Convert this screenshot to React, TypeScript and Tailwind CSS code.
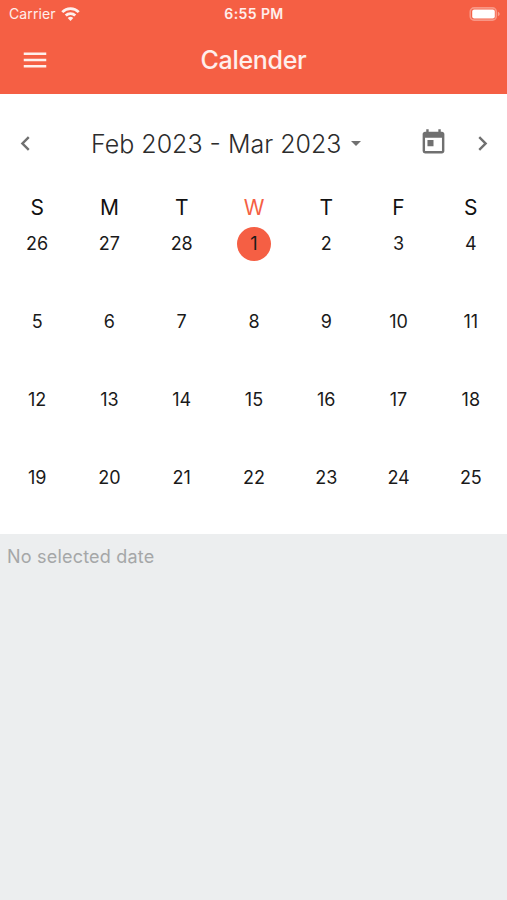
import { useState } from 'react'
import { MdArrowDropDown, MdChevronLeft, MdChevronRight, MdMenu, MdToday } from 'react-icons/md'

const weekdays = ['S', 'M', 'T', 'W', 'T', 'F', 'S']

const weeks = [
  [26, 27, 28, 1, 2, 3, 4],
  [5, 6, 7, 8, 9, 10, 11],
  [12, 13, 14, 15, 16, 17, 18],
  [19, 20, 21, 22, 23, 24, 25],
]

const TODAY = 1
const TODAY_COLUMN = 3

function WifiIcon() {
  return (
    <svg viewBox="0 0 20 15" className="w-[19px] h-[14px]" fill="none" stroke="currentColor" strokeWidth="3">
      <path d="M1.2 5.5a12.4 12.4 0 0 1 17.6 0" />
      <path d="M4.9 9.2a7.3 7.3 0 0 1 10.2 0" />
      <path d="M10 14.9l-3-3.1a4.3 4.3 0 0 1 6 0z" fill="currentColor" stroke="none" />
    </svg>
  )
}

function BatteryIcon() {
  return (
    <svg viewBox="0 0 31 14" className="w-[31px] h-[14px]" fill="none">
      <rect x="1.25" y="0.9" width="26" height="12.2" rx="3.8" stroke="white" strokeOpacity="0.35" strokeWidth="1.6" />
      <rect x="3.2" y="2.5" width="22.6" height="9" rx="2" fill="white" />
      <path d="M28.9 4.8c1.1.4 1.8 1.2 1.8 2.2s-.7 1.8-1.8 2.2z" fill="white" fillOpacity="0.4" />
    </svg>
  )
}

function StatusBar() {
  return (
    <div className="h-[27px] grid grid-cols-3 items-center px-[9px] text-[14px] leading-none">
      <div className="flex items-center gap-[5px] text-white/90">
        <span className="tracking-[0.1px]">Carrier</span>
        <WifiIcon />
      </div>
      <span className="pt-px pl-px text-center font-semibold tracking-[0.4px] text-white/90">6:55 PM</span>
      <div className="flex justify-end -mr-[2px]">
        <BatteryIcon />
      </div>
    </div>
  )
}

export default function App() {
  const [selected] = useState<number | null>(null)

  return (
    <div className="h-[900px] w-full flex flex-col bg-white overflow-hidden font-['Inter','Liberation_Sans',sans-serif]">
      <header className="h-[94px] shrink-0 bg-[#f55f44] text-white">
        <StatusBar />
        <div className="h-[66px] grid grid-cols-[70px_1fr_70px] items-center">
          <button className="pl-5">
            <MdMenu className="w-[30px] h-[30px] text-white/90" />
          </button>
          <h1 className="text-center text-[25px] leading-none font-medium tracking-[-0.3px] text-white/90">Calender</h1>
        </div>
      </header>

      {/* Month navigation */}
      <div className="h-[98px] shrink-0 flex items-center pl-[11px] pr-[10px] text-[#707070]">
        <button>
          <MdChevronLeft className="w-[29px] h-[29px]" />
        </button>
        <button className="ml-[51px] flex items-center whitespace-nowrap">
          <span className="pt-[2px] text-[25px] leading-none font-light text-[#2c2c2c]">Feb 2023 - Mar 2023</span>
          <MdArrowDropDown className="ml-[2px] w-6 h-6" />
        </button>
        <button className="ml-auto">
          <MdToday className="w-[29px] h-[29px] -mt-[2px]" />
        </button>
        <button className="ml-5">
          <MdChevronRight className="w-[29px] h-[29px]" />
        </button>
      </div>

      {/* Weekday names */}
      <div className="h-[30px] shrink-0 grid grid-cols-7 items-center pl-px text-center text-[21px] leading-none text-[#111]">
        {weekdays.map((day, i) => (
          <span key={i} className={i === TODAY_COLUMN ? 'text-[#f55f44]' : ''}>
            {day}
          </span>
        ))}
      </div>

      <div className="shrink-0 pl-px">
        {weeks.map((week) => (
          <div key={week[0]} className="h-[78px] grid grid-cols-7 justify-items-center pt-[5px]">
            {week.map((day) => (
              <button
                key={day}
                className={`w-[34px] h-[34px] rounded-full flex items-center justify-center text-[18px] leading-none text-[#1a1a1a] ${
                  day === TODAY ? 'bg-[#f55f44]' : ''
                }`}
              >
                {day}
              </button>
            ))}
          </div>
        ))}
      </div>

      <div className="flex-1 bg-[#eceeef] px-[7px] pt-[13px]">
        <p className="text-[18px] leading-5 text-[#a5a7a8] tracking-[0.2px]">{selected ?? 'No selected date'}</p>
      </div>
    </div>
  )
}
